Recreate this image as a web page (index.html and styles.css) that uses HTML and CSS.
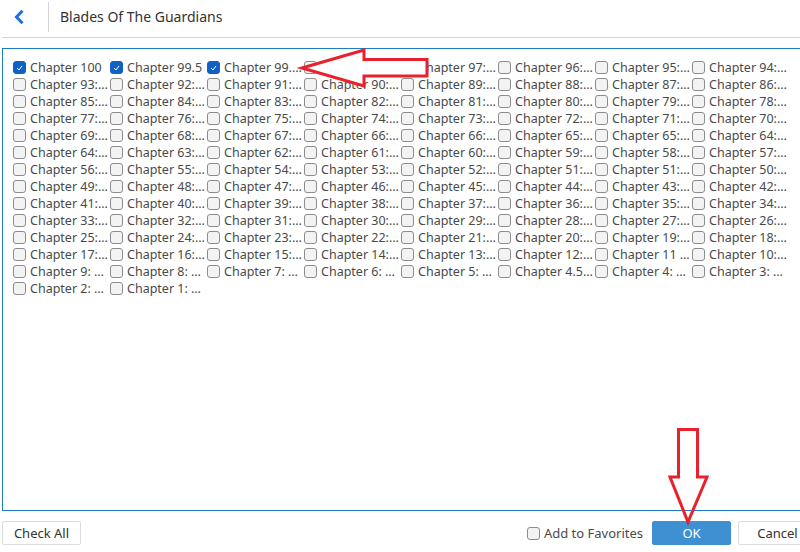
FILE: index.html
```
<!DOCTYPE html>
<html lang="en">

<head>
    <meta charset="UTF-8">
    <title>Blades Of The Guardians</title>
    <link rel="stylesheet" href="styles.css">
    <script src="chapters.js" defer></script>
</head>

<body>
    <div class="dialog">
        <header class="top-bar">
            <div class="back-btn">
                <svg width="12" height="16" viewBox="0 0 12 16">
                    <path d="M9.5 1.8 L3.5 8 L9.5 14.2" fill="none" stroke="#1e6fe0" stroke-width="3" stroke-linejoin="miter" />
                </svg>
            </div>
            <h1 class="title">Blades Of The Guardians</h1>
        </header>

        <section class="chapter-panel">
            <div class="chapter-grid" id="chapterGrid"></div>
        </section>

        <footer class="actions">
            <button class="btn">Check All</button>
            <div class="actions-right">
                <label class="fav">
                    <span class="box"></span>
                    <span>Add to Favorites</span>
                </label>
                <button class="btn btn-primary">OK</button>
                <button class="btn">Cancel</button>
            </div>
        </footer>
    </div>

    <!-- annotation arrows drawn over the dialog -->
    <svg class="annotations" width="800" height="552" viewBox="0 0 800 552">
        <polygon points="302,68 364,50 364,59.5 427,59.5 427,76 364,76 364,86" fill="#fff" stroke="#e8212b" stroke-width="3" />
        <polygon points="678.5,429.5 697.5,429.5 697.5,477 707,477 688,522 670,477 678.5,477" fill="none" stroke="#e8212b" stroke-width="3" />
    </svg>
</body>

</html>
```

FILE: chapters.js
```
var chapters = [
    ['Chapter 100', true], ['Chapter 99.5', true], ['Chapter 99.…', true], 'Chapter 98:…',
    'Chapter 97:…', 'Chapter 96:…', 'Chapter 95:…', 'Chapter 94:…',
    'Chapter 93:…', 'Chapter 92:…', 'Chapter 91:…', 'Chapter 90:…',
    'Chapter 89:…', 'Chapter 88:…', 'Chapter 87:…', 'Chapter 86:…',
    'Chapter 85:…', 'Chapter 84:…', 'Chapter 83:…', 'Chapter 82:…',
    'Chapter 81:…', 'Chapter 80:…', 'Chapter 79:…', 'Chapter 78:…',
    'Chapter 77:…', 'Chapter 76:…', 'Chapter 75:…', 'Chapter 74:…',
    'Chapter 73:…', 'Chapter 72:…', 'Chapter 71:…', 'Chapter 70:…',
    'Chapter 69:…', 'Chapter 68:…', 'Chapter 67:…', 'Chapter 66:…',
    'Chapter 66:…', 'Chapter 65:…', 'Chapter 65:…', 'Chapter 64:…',
    'Chapter 64:…', 'Chapter 63:…', 'Chapter 62:…', 'Chapter 61:…',
    'Chapter 60:…', 'Chapter 59:…', 'Chapter 58:…', 'Chapter 57:…',
    'Chapter 56:…', 'Chapter 55:…', 'Chapter 54:…', 'Chapter 53:…',
    'Chapter 52:…', 'Chapter 51:…', 'Chapter 51:…', 'Chapter 50:…',
    'Chapter 49:…', 'Chapter 48:…', 'Chapter 47:…', 'Chapter 46:…',
    'Chapter 45:…', 'Chapter 44:…', 'Chapter 43:…', 'Chapter 42:…',
    'Chapter 41:…', 'Chapter 40:…', 'Chapter 39:…', 'Chapter 38:…',
    'Chapter 37:…', 'Chapter 36:…', 'Chapter 35:…', 'Chapter 34:…',
    'Chapter 33:…', 'Chapter 32:…', 'Chapter 31:…', 'Chapter 30:…',
    'Chapter 29:…', 'Chapter 28:…', 'Chapter 27:…', 'Chapter 26:…',
    'Chapter 25:…', 'Chapter 24:…', 'Chapter 23:…', 'Chapter 22:…',
    'Chapter 21:…', 'Chapter 20:…', 'Chapter 19:…', 'Chapter 18:…',
    'Chapter 17:…', 'Chapter 16:…', 'Chapter 15:…', 'Chapter 14:…',
    'Chapter 13:…', 'Chapter 12:…', 'Chapter 11 …', 'Chapter 10:…',
    'Chapter 9: …', 'Chapter 8: …', 'Chapter 7: …', 'Chapter 6: …',
    'Chapter 5: …', 'Chapter 4.5…', 'Chapter 4: …', 'Chapter 3: …',
    'Chapter 2: …', 'Chapter 1: …'
];

var grid = document.getElementById('chapterGrid');

chapters.forEach(function (item) {
    var name = Array.isArray(item) ? item[0] : item;
    var checked = Array.isArray(item) && item[1];

    var label = document.createElement('label');
    label.className = 'chapter';

    var box = document.createElement('span');
    box.className = checked ? 'box checked' : 'box';
    if (checked) {
        box.innerHTML = '<svg width="7" height="6" viewBox="0 0 7 6"><path d="M1 3 L3 5 L6 1" fill="none" stroke="#fff" stroke-width="1"/></svg>';
    }

    var text = document.createElement('span');
    text.className = 'chapter-name';
    text.textContent = name;

    label.appendChild(box);
    label.appendChild(text);
    grid.appendChild(label);
});
```

FILE: styles.css
```
:root {
    --blue: #1a7bc9;
    --primary: #3f90d2;
    --text: #333;
    --label: #4a4a4a;
    --line: #d4d4d4;
}

* {
    margin: 0;
    padding: 0;
    box-sizing: border-box;
}

body {
    width: 800px;
    height: 552px;
    overflow: hidden;
    position: relative;
    background: #fff;
    font-family: 'Noto Sans', 'Open Sans', sans-serif;
    color: var(--text);
}

.dialog {
    width: 815px;
    margin-left: 2px;
}

.top-bar {
    display: flex;
    align-items: center;
    height: 38px;
    border-bottom: 1px solid var(--line);
}

.back-btn {
    width: 47px;
    height: 30px;
    margin-top: -4px;
    padding-left: 11px;
    display: flex;
    align-items: center;
    border-right: 1px solid var(--line);
}

.title {
    font-size: 14px;
    font-weight: normal;
    margin-left: 11px;
    margin-top: -4px;
    color: #333;
}

.chapter-panel {
    margin-top: 10px;
    height: 463px;
    border: 1px solid var(--blue);
    padding: 10px 0 0 10px;
}

.chapter-grid {
    display: grid;
    grid-template-columns: repeat(8, 97px);
    grid-auto-rows: 17px;
}

.chapter {
    display: flex;
    align-items: center;
    gap: 4px;
    font-size: 12.5px;
    color: var(--label);
    white-space: nowrap;
    overflow: hidden;
}

.box {
    flex: none;
    width: 13px;
    height: 13px;
    border: 1px solid #8c8c8c;
    border-radius: 3px;
    background: #f3f3f3;
    display: flex;
    align-items: center;
    justify-content: center;
}

.box.checked {
    background: #0f62c4;
    border-color: #0f62c4;
}

.actions {
    display: flex;
    justify-content: space-between;
    align-items: center;
    margin-top: 10px;
}

.actions-right {
    display: flex;
    align-items: center;
    gap: 7px;
}

.btn {
    height: 24px;
    width: 79px;
    border: 1px solid #dcdcdc;
    border-radius: 2px;
    background: #fff;
    font-family: inherit;
    font-size: 13px;
    color: var(--text);
}

.btn-primary {
    background: var(--primary);
    border-color: var(--primary);
    color: #fff;
}

.fav {
    display: flex;
    align-items: center;
    gap: 4px;
    font-size: 13px;
    color: var(--label);
    margin-right: 2px;
}

.annotations {
    position: absolute;
    top: 0;
    left: 0;
    pointer-events: none;
}
```
